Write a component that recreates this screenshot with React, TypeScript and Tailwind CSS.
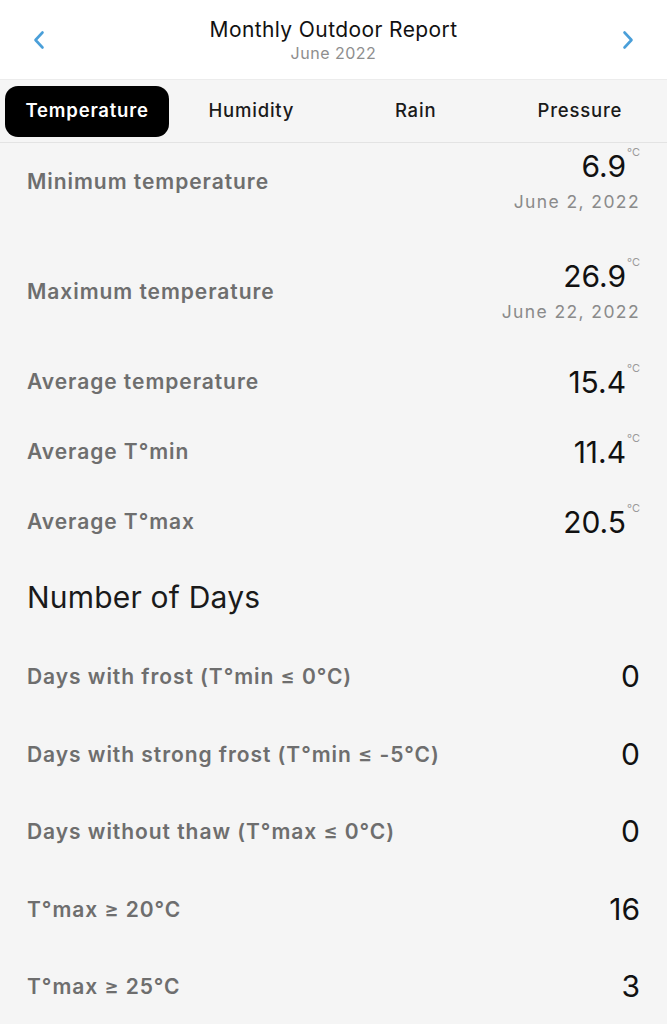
import React from 'react';

const tabs = ['Temperature', 'Humidity', 'Rain', 'Pressure'];

interface TempRow {
  label: string;
  value: string;
  date?: string;
}

const tempRows: TempRow[] = [
  { label: 'Minimum temperature', value: '6.9', date: 'June 2, 2022' },
  { label: 'Maximum temperature', value: '26.9', date: 'June 22, 2022' },
  { label: 'Average temperature', value: '15.4' },
  { label: 'Average T°min', value: '11.4' },
  { label: 'Average T°max', value: '20.5' },
];

const dayRows = [
  { label: 'Days with frost (T°min ≤ 0°C)', value: '0' },
  { label: 'Days with strong frost (T°min ≤ -5°C)', value: '0' },
  { label: 'Days without thaw (T°max ≤ 0°C)', value: '0' },
  { label: 'T°max ≥ 20°C', value: '16' },
  { label: 'T°max ≥ 25°C', value: '3' },
];

const Chevron: React.FC<{ dir: 'left' | 'right' }> = ({ dir }) => (
  <svg width="12" height="20" viewBox="0 0 12 20" fill="none" stroke="#4a9fd9" strokeWidth={2.6} strokeLinecap="round" strokeLinejoin="round">
    {dir === 'left' ? <path d="M9.5 2.5 L2.5 10 L9.5 17.5" /> : <path d="M2.5 2.5 L9.5 10 L2.5 17.5" />}
  </svg>
);

const Row: React.FC<TempRow> = ({ label, value, date }) => (
  <div className={`flex items-center justify-between pl-[27px] pr-[27px] ${date ? 'h-[110px]' : 'h-[70px]'}`}>
    <span className="text-[21px] tracking-[0.95px] font-semibold text-[#6e6e6e]">{label}</span>
    <div className="flex flex-col items-end">
      <div className="flex items-start">
        <span className="text-[30px] leading-[34px] text-[#111]">{value}</span>
        <span className="text-[11px] leading-none text-[#9a9a9a] ml-[1px] -mt-[2px]">°C</span>
      </div>
      {date && <span className="mt-[6px] text-[17.5px] tracking-[1.4px] text-[#8a8a8a]">{date}</span>}
    </div>
  </div>
);

export default function App() {
  return (
    <div className="w-[667px] h-[1024px] overflow-hidden bg-[#f5f5f5] font-['Inter',sans-serif] flex flex-col">
      {/* Header */}
      <header className="h-[80px] bg-white flex items-center justify-between px-[33px] border-b border-[#ececec]">
        <Chevron dir="left" />
        <div className="flex flex-col items-center">
          <h1 className="text-[21px] tracking-[0.4px] leading-[26px] text-[#111] mt-[1px]">Monthly Outdoor Report</h1>
          <p className="text-[16px] leading-[20px] tracking-[0.5px] text-[#8e8e8e]">June 2022</p>
        </div>
        <Chevron dir="right" />
      </header>

      {/* Tabs */}
      <nav className="h-[63px] px-[5px] grid grid-cols-4 items-center border-b border-[#e3e3e3] bg-[#f5f5f5]">
        {tabs.map((t, i) => (
          <button
            key={t}
            className={`h-[51px] rounded-[13px] text-[18.5px] tracking-[0.8px] ${i === 0 ? 'bg-black text-white font-semibold' : 'text-[#1a1a1a] font-medium'}`}
          >
            {t}
          </button>
        ))}
      </nav>

      {/* Scrolled content */}
      <div className="flex-1 overflow-hidden">
        <div className="-mt-[16px]">
          {tempRows.map((r) => (
            <Row key={r.label} {...r} />
          ))}
          <h2 className="h-[81px] flex items-center pl-[27px] text-[30px] tracking-[0.2px] text-[#1a1a1a]">Number of Days</h2>
          {dayRows.map((r) => (
            <div key={r.label} className="h-[77.5px] flex items-center justify-between pl-[27px] pr-[27px]">
              <span className="text-[21px] tracking-[0.95px] font-semibold text-[#6e6e6e]">{r.label}</span>
              <span className="text-[30px] text-[#111]">{r.value}</span>
            </div>
          ))}
        </div>
      </div>
    </div>
  );
}
